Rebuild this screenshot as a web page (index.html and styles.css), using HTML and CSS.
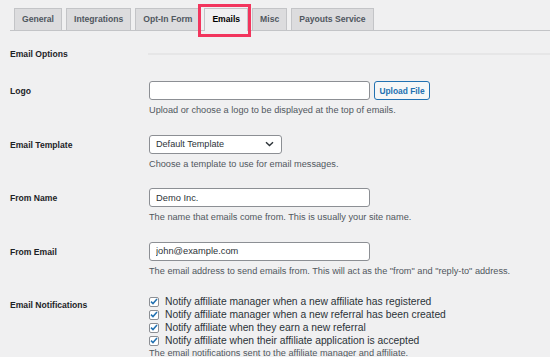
FILE: index.html
```html
<!DOCTYPE html>
<html lang="en">
<head>
    <meta charset="UTF-8">
    <title>Affiliate Settings - Emails</title>
    <link rel="stylesheet" href="styles.css">
</head>
<body>
    <div class="wrap">
        <nav class="tabs">
            <a class="tab">General</a>
            <a class="tab">Integrations</a>
            <a class="tab">Opt-In Form</a>
            <a class="tab active">Emails<span class="highlight"></span></a>
            <a class="tab">Misc</a>
            <a class="tab">Payouts Service</a>
        </nav>

        <div class="section-head">
            <h2>Email Options</h2>
            <span class="rule"></span>
        </div>

        <div class="row first">
            <div class="label">Logo</div>
            <div class="field">
                <div class="inline">
                    <input class="text" type="text" value="">
                    <button class="btn">Upload File</button>
                </div>
                <p class="desc">Upload or choose a logo to be displayed at the top of emails.</p>
            </div>
        </div>

        <div class="row">
            <div class="label">Email Template</div>
            <div class="field">
                <div class="select">
                    <span>Default Template</span>
                    <svg width="9" height="6" viewBox="0 0 9 6"><path d="M1 1.2 4.5 4.6 8 1.2" fill="none" stroke="#2c3338" stroke-width="1.4"/></svg>
                </div>
                <p class="desc">Choose a template to use for email messages.</p>
            </div>
        </div>

        <div class="row">
            <div class="label">From Name</div>
            <div class="field">
                <input class="text" type="text" value="Demo Inc.">
                <p class="desc">The name that emails come from. This is usually your site name.</p>
            </div>
        </div>

        <div class="row">
            <div class="label">From Email</div>
            <div class="field">
                <input class="text" type="text" value="john@example.com">
                <p class="desc">The email address to send emails from. This will act as the "from" and "reply-to" address.</p>
            </div>
        </div>

        <div class="row">
            <div class="label">Email Notifications</div>
            <div class="field">
                <label class="check"><span class="box"><svg width="8" height="7" viewBox="0 0 8 7"><path d="M1 3.6 3 5.6 7 1" fill="none" stroke="#2271b1" stroke-width="1.5"/></svg></span>Notify affiliate manager when a new affiliate has registered</label>
                <label class="check"><span class="box"><svg width="8" height="7" viewBox="0 0 8 7"><path d="M1 3.6 3 5.6 7 1" fill="none" stroke="#2271b1" stroke-width="1.5"/></svg></span>Notify affiliate manager when a new referral has been created</label>
                <label class="check"><span class="box"><svg width="8" height="7" viewBox="0 0 8 7"><path d="M1 3.6 3 5.6 7 1" fill="none" stroke="#2271b1" stroke-width="1.5"/></svg></span>Notify affiliate when they earn a new referral</label>
                <label class="check"><span class="box"><svg width="8" height="7" viewBox="0 0 8 7"><path d="M1 3.6 3 5.6 7 1" fill="none" stroke="#2271b1" stroke-width="1.5"/></svg></span>Notify affiliate when their affiliate application is accepted</label>
                <p class="desc">The email notifications sent to the affiliate manager and affiliate.</p>
            </div>
        </div>
    </div>
</body>
</html>
```

FILE: styles.css
```css
body {
    margin: 0;
    background-color: #f0f0f1;
    font-family: "Liberation Sans", Arial, sans-serif;
    font-size: 10px;
    color: #1d2327;
    overflow: hidden;
}
.wrap {
    padding: 8px 0 0 10px;
}
.tabs {
    display: flex;
    gap: 4px;
    padding-left: 4px;
    border-bottom: 1px solid #c3c4c7;
    height: 22px;
}
.tab {
    position: relative;
    display: block;
    padding: 0 7px;
    height: 21px;
    line-height: 21px;
    background-color: #dcdcde;
    border: 1px solid #c3c4c7;
    border-bottom: none;
    color: #50575e;
    font-weight: bold;
    font-size: 8.6px;
}
.tab.active {
    background-color: #f0f0f1;
    color: #000;
    height: 22px;
    margin-bottom: -1px;
}
.highlight {
    position: absolute;
    left: -7px;
    right: -4px;
    top: -5px;
    bottom: -6px;
    border: 3px solid #f2355d;
}
.section-head {
    display: flex;
    align-items: center;
    height: 22px;
    margin-top: 12px;
}
.section-head h2 {
    margin: 0;
    width: 138px;
    font-size: 8.6px;
    font-weight: bold;
}
.rule {
    flex: 1;
    height: 2px;
    margin-top: -1px;
    background-color: #e6e6e7;
}
.row {
    display: flex;
    margin-top: 17.5px;
}
.row.first {
    margin-top: 16px;
}
.label {
    width: 139px;
    flex-shrink: 0;
    line-height: 20px;
    font-weight: bold;
    font-size: 8.6px;
}
.field {
    flex: 1;
}
.inline {
    display: flex;
    gap: 4px;
}
.text {
    display: block;
    box-sizing: border-box;
    width: 221px;
    height: 19px;
    margin: 0;
    padding: 0 6px;
    border: 1px solid #8c8f94;
    border-radius: 3px;
    background-color: #fff;
    font-family: inherit;
    font-size: 9.3px;
    color: #2c3338;
}
.btn {
    box-sizing: border-box;
    width: 56px;
    height: 19px;
    padding: 0;
    border: 1px solid #2271b1;
    border-radius: 3px;
    background-color: #f6f7f7;
    color: #2271b1;
    font-family: inherit;
    font-size: 8.4px;
    font-weight: bold;
}
.select {
    box-sizing: border-box;
    display: flex;
    align-items: center;
    justify-content: space-between;
    width: 133px;
    height: 19px;
    padding: 0 7px 0 6px;
    border: 1px solid #8c8f94;
    border-radius: 3px;
    background-color: #fff;
    font-size: 9.1px;
    color: #2c3338;
}
.desc {
    margin: 4px 0 0;
    line-height: 13px;
    color: #50575e;
    font-size: 9.2px;
}
.check {
    display: flex;
    align-items: center;
    height: 13px;
    font-size: 10.3px;
    color: #2c3338;
}
.box {
    box-sizing: border-box;
    display: flex;
    align-items: center;
    justify-content: center;
    width: 10px;
    height: 10px;
    margin-right: 6px;
    border: 1px solid #8c8f94;
    border-radius: 2px;
    background-color: #fff;
}
.check + .desc {
    margin-top: 0;
}
```
